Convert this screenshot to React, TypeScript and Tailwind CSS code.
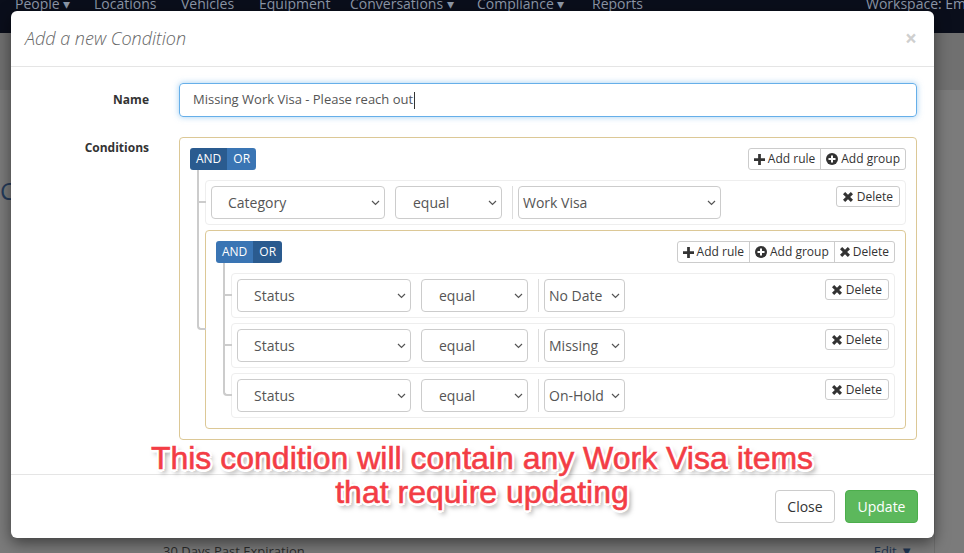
import React from "react";

const Chevron = () => (
  <svg width="9" height="6" viewBox="0 0 9 6" className="shrink-0">
    <path d="M1 1l3.5 3.5L8 1" stroke="#555" strokeWidth="1.2" fill="none" />
  </svg>
);

const PlusIcon = () => (
  <svg width="11" height="11" viewBox="0 0 12 12" className="shrink-0">
    <path d="M4.5 0h3v4.5H12v3H7.5V12h-3V7.5H0v-3h4.5z" fill="#333" />
  </svg>
);

const PlusCircleIcon = () => (
  <svg width="12" height="12" viewBox="0 0 12 12" className="shrink-0">
    <circle cx="6" cy="6" r="6" fill="#333" />
    <path d="M5 2.5h2V5h2.5v2H7v2.5H5V7H2.5V5H5z" fill="#fff" />
  </svg>
);

const RemoveIcon = () => (
  <svg width="10" height="10" viewBox="0 0 12 12" className="shrink-0">
    <path d="M2.6 0L6 3.4 9.4 0 12 2.6 8.6 6 12 9.4 9.4 12 6 8.6 2.6 12 0 9.4 3.4 6 0 2.6z" fill="#333" />
  </svg>
);

const Select = ({ label, className }: { label: string; className: string }) => (
  <div
    className={`flex h-[33px] items-center justify-between rounded-[4px] border border-[#ccc] bg-white pr-[4px] text-[14px] text-[#555] ${className}`}
  >
    <span>{label}</span>
    <Chevron />
  </div>
);

const DeleteButton = () => (
  <div className="ml-auto flex h-[21px] items-center gap-[4px] rounded-[3px] border border-[#ccc] bg-white px-[6px] text-[12px] text-[#333]">
    <RemoveIcon />
    <span>Delete</span>
  </div>
);

// tree lines to the left of each child in a rules list
const Connector = ({ first, last }: { first?: boolean; last?: boolean }) => (
  <>
    <span
      className={`absolute left-[-9px] w-[9px] border-b-2 border-l-2 border-[#ccc] ${
        first ? "top-[-11px] h-[calc(50%+11px)]" : "top-[-5px] h-[calc(50%+5px)]"
      } ${last ? "rounded-bl-[4px]" : ""}`}
    />
    {!last && <span className="absolute left-[-9px] top-1/2 h-[calc(50%+5px)] border-l-2 border-[#ccc]" />}
  </>
);

const Rule = ({
  field,
  value,
  valueWidth,
  first,
  last,
}: {
  field: string;
  value: string;
  valueWidth: string;
  first?: boolean;
  last?: boolean;
}) => (
  <div className="relative flex items-start rounded-[4px] border border-[#eee] bg-white p-[5px]">
    <Connector first={first} last={last} />
    <Select label={field} className="w-[174px] pl-[16px]" />
    <Select label="equal" className="ml-[10px] w-[107px] pl-[17px]" />
    <div className="ml-[10px] border-l border-[#ddd] pl-[5px]">
      <Select label={value} className={`pl-[4px] ${valueWidth}`} />
    </div>
    <DeleteButton />
  </div>
);

const Conjunction = ({ and }: { and: boolean }) => (
  <div className="flex h-[22px] overflow-hidden rounded-[3px] text-[12px] text-white">
    <div className={`flex items-center px-[6px] ${and ? "bg-[#2a5b8f]" : "bg-[#3a75b4]"}`}>AND</div>
    <div className={`flex items-center px-[6px] ${and ? "bg-[#3a75b4]" : "bg-[#2a5b8f]"}`}>OR</div>
  </div>
);

const GroupActions = ({ withDelete }: { withDelete?: boolean }) => (
  <div className="flex h-[22px] rounded-[3px] border border-[#ccc] bg-white text-[12px] text-[#333]">
    <div className="flex items-center gap-[3px] px-[5px]">
      <PlusIcon />
      <span>Add rule</span>
    </div>
    <div className="flex items-center gap-[3px] border-l border-[#ccc] px-[5px]">
      <PlusCircleIcon />
      <span>Add group</span>
    </div>
    {withDelete && (
      <div className="flex items-center gap-[3px] border-l border-[#ccc] px-[5px]">
        <RemoveIcon />
        <span>Delete</span>
      </div>
    )}
  </div>
);

export default function App() {
  return (
    <div className="relative flex h-[553px] w-[964px] flex-col overflow-hidden bg-[#7b7b7b] font-['Open_Sans',sans-serif]">
      {/* page behind the backdrop */}
      <nav className="flex h-[33px] shrink-0 items-start overflow-hidden bg-[#0a0e1b] pl-[15px] text-[14px] text-[#8d97a8]">
        <div className="-mt-[7px] flex items-center whitespace-nowrap">
          <span className="w-[79px] shrink-0">People ▾</span>
          <span className="w-[87px] shrink-0">Locations</span>
          <span className="w-[78px] shrink-0">Vehicles</span>
          <span className="w-[91px] shrink-0">Equipment</span>
          <span className="w-[127px] shrink-0">Conversations ▾</span>
          <span className="w-[115px] shrink-0">Compliance ▾</span>
          <span className="w-[274px] shrink-0">Reports</span>
          <span className="shrink-0">Workspace: Employees</span>
        </div>
      </nav>
      <div className="h-[57px] shrink-0 bg-[#707070]" />
      <div className="flex flex-1">
        <div className="flex flex-1 flex-col">
          <div className="pt-[86px] text-[24px] leading-[30px] text-[#243a5a]">Compliance Conditions</div>
          <div className="mt-auto flex h-[12px] pl-[163px] pr-[21px] text-[13px] leading-[20px]">
            <span className="text-[#2b2b2b]">30 Days Past Expiration</span>
            <span className="ml-auto text-[#1f3552]">Edit ▼</span>
          </div>
        </div>
        <div className="flex w-[30px] flex-col border-l border-[#6e6e6e] pt-[166px]" />
      </div>

      {/* modal */}
      <div className="absolute left-[11px] top-[11px] flex w-[923px] flex-col rounded-[6px] bg-white shadow-[0_5px_15px_rgba(0,0,0,0.5)]">
        <div className="flex h-[56px] items-center justify-between border-b border-[#e5e5e5] pl-[14px] pr-[17px]">
          <span className="text-[18px] font-light italic text-[#666]">Add a new Condition</span>
          <span className="text-[21px] font-bold leading-none text-[#cfcfcf]">×</span>
        </div>

        <div className="flex flex-col gap-[20px] pb-[34px] pr-[17px] pt-[16px]">
          <div className="flex">
            <div className="w-[153px] pr-[15px] pt-[8px] text-right text-[12px] font-bold text-[#333]">Name</div>
            <div className="ml-[15px] flex h-[34px] flex-1 items-center rounded-[4px] border border-[#66afe9] pl-[13px] text-[13px] text-[#555] shadow-[0_0_6px_rgba(102,175,233,0.6)]">
              Missing Work Visa - Please reach out
              <span className="ml-[1px] h-[17px] w-px bg-[#333]" />
            </div>
          </div>

          <div className="flex">
            <div className="w-[153px] pr-[15px] pt-[2px] text-right text-[12px] font-bold text-[#333]">Conditions</div>
            <div className="ml-[15px] flex flex-1 flex-col gap-[10px] rounded-[4px] border border-[#dcc896] bg-white p-[10px]">
              <div className="flex items-start justify-between">
                <Conjunction and />
                <GroupActions />
              </div>
              <div className="flex flex-col gap-[5px] pl-[15px]">
                <Rule field="Category" value="Work Visa" valueWidth="w-[203px]" first />
                <div className="relative flex flex-col gap-[10px] rounded-[4px] border border-[#dcc896] bg-white p-[10px]">
                  <Connector last />
                  <div className="flex items-start justify-between">
                    <Conjunction and={false} />
                    <GroupActions withDelete />
                  </div>
                  <div className="flex flex-col gap-[5px] pl-[15px]">
                    <Rule field="Status" value="No Date" valueWidth="w-[81px]" first />
                    <Rule field="Status" value="Missing" valueWidth="w-[81px]" />
                    <Rule field="Status" value="On-Hold" valueWidth="w-[81px]" last />
                  </div>
                </div>
              </div>
            </div>
          </div>
        </div>

        <div className="flex justify-end gap-[10px] border-t border-[#e5e5e5] py-[15px] pr-[16px]">
          <div className="flex h-[33px] w-[60px] items-center justify-center rounded-[4px] border border-[#ccc] bg-white text-[14px] text-[#333]">
            Close
          </div>
          <div className="flex h-[33px] w-[73px] items-center justify-center rounded-[4px] border border-[#4cae4c] bg-[#5cb85c] text-[14px] text-white">
            Update
          </div>
        </div>
      </div>

      {/* annotation over the screenshot */}
      <div className="absolute left-[100px] top-[441px] w-[764px] text-center font-['Liberation_Sans',Arial,sans-serif] text-[32px] leading-[34px] text-[#f33d45] [-webkit-text-stroke:0.6px_#f33d45] [text-shadow:2.5px_0_0_#fff,-2.5px_0_0_#fff,0_2.5px_0_#fff,0_-2.5px_0_#fff,2px_2px_0_#fff,-2px_-2px_0_#fff,2px_-2px_0_#fff,-2px_2px_0_#fff,3px_4px_5px_rgba(0,0,0,0.5)]">
        This condition will contain any Work Visa items
        <br />
        that require updating
      </div>
    </div>
  );
}
